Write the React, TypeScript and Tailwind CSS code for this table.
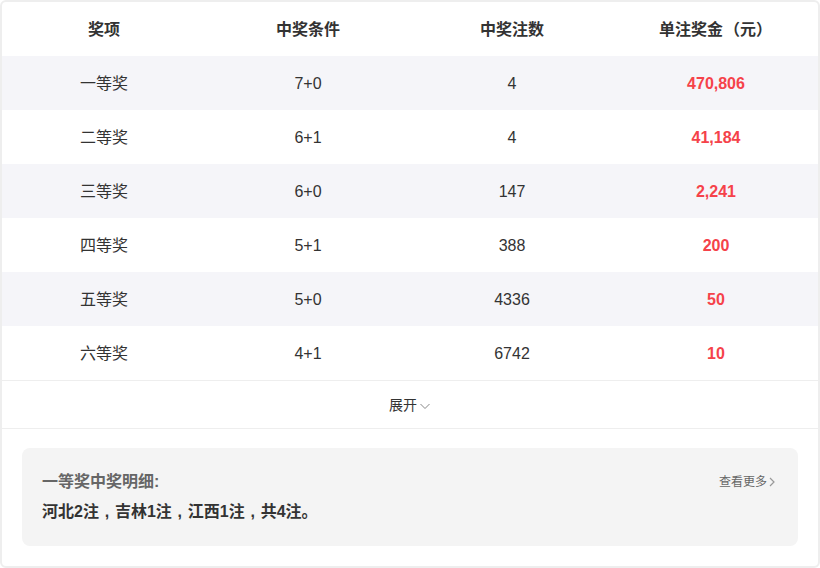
import React from "react";

const rows = [
  ["一等奖", "7+0", "4", "470,806"],
  ["二等奖", "6+1", "4", "41,184"],
  ["三等奖", "6+0", "147", "2,241"],
  ["四等奖", "5+1", "388", "200"],
  ["五等奖", "5+0", "4336", "50"],
  ["六等奖", "4+1", "6742", "10"],
];

const Comma = () => <span className="inline-block w-[16px] text-center">,</span>;

export default function App() {
  return (
    <div
      className="w-[820px] h-[568px] bg-white border-2 border-[#eeeeee] rounded-[6px] flex flex-col overflow-hidden"
      style={{ fontFamily: '"Liberation Sans", "Noto Sans CJK SC", sans-serif' }}
    >
      <div className="grid grid-cols-4 h-[54px] pt-[2px] items-center text-center text-[16px] font-bold text-[#333]">
        <div>奖项</div>
        <div>中奖条件</div>
        <div>中奖注数</div>
        <div>
          单注奖金
          <span className="inline-block w-[17px] text-right">（</span>元
          <span className="inline-block w-[17px] text-left">）</span>
        </div>
      </div>
      {rows.map((r, i) => (
        <div
          key={i}
          className={`grid grid-cols-4 h-[54px] pt-[2px] items-center text-center text-[16px] text-[#333] ${i % 2 === 0 ? "bg-[#f5f5f9]" : "bg-white"}`}
        >
          <div>{r[0]}</div>
          <div>{r[1]}</div>
          <div>{r[2]}</div>
          <div className="font-bold text-[#f5424a]">{r[3]}</div>
        </div>
      ))}
      <div className="h-[49px] pt-[2px] border-y border-[#eeeeee] flex items-center justify-center text-[14px] text-[#333]">
        <span>展开</span>
        <svg width="12" height="12" viewBox="0 0 12 12" className="ml-[2px]" fill="none">
          <path d="M1.5 4l4.5 4.5L10.5 4" stroke="#888" strokeWidth="1" />
        </svg>
      </div>
      <div className="px-5 pt-[19px]">
        <div className="h-[98px] bg-[#f4f4f4] rounded-[8px] px-5 pt-[22px]">
          <div className="flex items-center justify-between">
            <span className="text-[16px] font-bold text-[#666]">一等奖中奖明细:</span>
            <span className="flex items-center text-[12px] text-[#666] mr-[2px]">
              查看更多
              <svg width="8" height="12" viewBox="0 0 8 12" fill="none" className="ml-[1px]">
                <path d="M2 2l4 4-4 4" stroke="#999" strokeWidth="1.2" />
              </svg>
            </span>
          </div>
          <div className="mt-[6px] text-[16px] font-bold text-[#333]">
            河北2注<Comma />吉林1注<Comma />江西1注<Comma />共4注。
          </div>
        </div>
      </div>
    </div>
  );
}
